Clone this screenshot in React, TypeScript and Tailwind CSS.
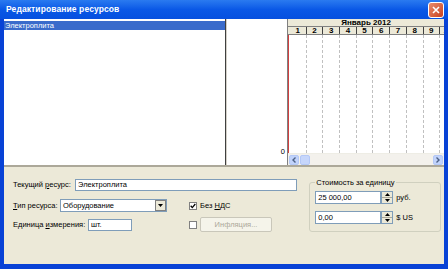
import React from "react";

const days = [1, 2, 3, 4, 5, 6, 7, 8, 9, 10];

function Spinner() {
  return (
    <div className="flex flex-col w-[12px] h-[13px] border border-[#7f9db9] bg-[#ece9d8]">
      <div className="flex-1 flex items-center justify-center border-b border-[#aca899]">
        <svg width="5" height="3" viewBox="0 0 5 3"><path d="M0 3 L2.5 0 L5 3Z" fill="#000" /></svg>
      </div>
      <div className="flex-1 flex items-center justify-center">
        <svg width="5" height="3" viewBox="0 0 5 3"><path d="M0 0 L2.5 3 L5 0Z" fill="#000" /></svg>
      </div>
    </div>
  );
}

export default function App() {
  return (
    <div
      className="w-[448px] h-[269px] flex flex-col bg-[#0842d6] overflow-hidden"
      style={{ fontFamily: '"Liberation Sans", Arial, sans-serif' }}
    >
      {/* title bar */}
      <div className="h-[19px] flex items-center justify-between pl-[6px] pr-[4px] bg-gradient-to-b from-[#2a7af0] via-[#0a58e6] to-[#0650df]">
        <span className="text-white font-bold text-[8.5px] tracking-[0.1px] whitespace-nowrap">Редактирование ресурсов</span>
        <div className="w-[16px] h-[16px] rounded-[3px] border border-white bg-gradient-to-br from-[#e98b6b] to-[#c9401c] flex items-center justify-center">
          <svg width="8" height="8" viewBox="0 0 8 8"><path d="M1 1 L7 7 M7 1 L1 7" stroke="#fff" strokeWidth="1.6" /></svg>
        </div>
      </div>

      {/* body */}
      <div className="flex-1 mx-[4px] mb-[5px] bg-[#ece9d8] flex flex-col">
        {/* top row */}
        <div className="h-[148px] flex border-b-2 border-[#aca899]">
          {/* list */}
          <div className="w-[221px] bg-white pt-[2px]">
            <div className="h-[9px] bg-[#3a6bcb] text-white text-[7.5px] leading-[9px] pl-[1px] whitespace-nowrap">Электроплита</div>
          </div>
          <div className="w-[1px] bg-[#404040]" />
          <div className="w-[1px] bg-[#d4d0c8]" />
          {/* middle */}
          <div className="w-[61px] bg-white flex items-end justify-end pr-[2px] pb-[10px] border-r border-[#808080]">
            <span className="text-[7.5px] leading-none text-black">0</span>
          </div>
          {/* gantt */}
          <div className="flex-1 flex flex-col bg-white overflow-hidden">
            <div className="h-[8px] bg-[#ece9d8] border-b border-[#808080] flex items-center justify-center">
              <span className="text-[8px] font-bold leading-none text-black whitespace-nowrap">Январь 2012</span>
            </div>
            <div className="h-[8px] bg-[#ece9d8] border-b border-[#808080] flex">
              <div className="w-[2px] shrink-0" />
              {days.map((d) => (
                <div key={d} className="w-[16.7px] shrink-0 border-r border-[#404040] text-[8px] font-bold leading-[8px] text-center text-black overflow-hidden">
                  {d}
                </div>
              ))}
            </div>
            <div className="flex-1 flex relative">
              <div className="w-[1px] shrink-0 bg-[#d04040]" />
              <div className="w-[1px] shrink-0" />
              {days.map((d) => (
                <div key={d} className="w-[16.7px] shrink-0 border-r border-dashed border-[#c0c0c0]" />
              ))}
            </div>
            {/* scrollbar */}
            <div className="h-[12px] bg-[#f3f1ec] flex items-center justify-between px-[1px] border-t border-[#eeede5]">
              <div className="flex gap-[1px]">
                <div className="w-[10px] h-[10px] rounded-[2px] bg-[#c1d3fb] border border-[#b4c8f6] flex items-center justify-center">
                  <svg width="4" height="6" viewBox="0 0 4 6"><path d="M3.5 0.5 L1 3 L3.5 5.5" stroke="#4d6185" strokeWidth="1.4" fill="none" /></svg>
                </div>
                <div className="w-[10px] h-[10px] rounded-[2px] bg-[#c6d6fb] border border-[#b4c8f6]" />
              </div>
              <div className="w-[10px] h-[10px] rounded-[2px] bg-[#c1d3fb] border border-[#b4c8f6] flex items-center justify-center">
                <svg width="4" height="6" viewBox="0 0 4 6"><path d="M0.5 0.5 L3 3 L0.5 5.5" stroke="#4d6185" strokeWidth="1.4" fill="none" /></svg>
              </div>
            </div>
          </div>
        </div>

        {/* bottom panel */}
        <div className="flex-1 flex pl-[9px] pr-[3px] pt-[11px] text-[7.5px] text-black whitespace-nowrap">
          <div className="flex flex-col w-[290px]">
            <div className="flex items-center h-[13px]">
              <span className="w-[62px] shrink-0">Текущий <u>р</u>есурс:</span>
              <div className="w-[222px] h-[12px] bg-white border border-[#7f9db9] leading-[10px] pl-[2px]">Электроплита</div>
            </div>
            <div className="flex items-center h-[13px] mt-[8px]">
              <span className="w-[47px] shrink-0"><u>Т</u>ип ресурса:</span>
              <div className="w-[107px] h-[13px] bg-white border border-[#7f9db9] flex items-center justify-between pl-[2px]">
                <span>Оборудование</span>
                <div className="w-[11px] h-[11px] bg-[#ece9d8] border border-[#808080] flex items-center justify-center">
                  <svg width="5" height="3" viewBox="0 0 5 3"><path d="M0 0 L2.5 3 L5 0Z" fill="#000" /></svg>
                </div>
              </div>
              <div className="ml-[22px] flex items-center gap-[3px]">
                <div className="w-[8px] h-[8px] bg-white border border-[#808080] flex items-center justify-center">
                  <svg width="6" height="6" viewBox="0 0 6 6"><path d="M0.7 2.8 L2.3 4.6 L5.3 1" stroke="#000" strokeWidth="1.3" fill="none" /></svg>
                </div>
                <span>Без <u>Н</u>ДС</span>
              </div>
            </div>
            <div className="flex items-center h-[15px] mt-[5px]">
              <span className="w-[75px] shrink-0">Единица <u>и</u>змерения:</span>
              <div className="w-[44px] h-[12px] bg-white border border-[#7f9db9] leading-[10px] pl-[2px]">шт.</div>
              <div className="ml-[57px] w-[8px] h-[8px] bg-white border border-[#808080]" />
              <div className="ml-[3px] w-[72px] h-[15px] border border-[#c9c7ba] rounded-[2px] bg-[#f5f4ea] text-[#aca899] flex items-center justify-center">
                Инфляция...
              </div>
            </div>
          </div>
          <div className="ml-[9px] w-[133px] h-[50px] mt-[4px] relative border border-[#d0d0bf] rounded-[3px]">
            <span className="absolute -top-[5px] left-[5px] bg-[#ece9d8] px-[1px] leading-[9px]">Стоимость за единицу</span>
            <div className="flex flex-col gap-[7px] pl-[5px] pt-[8px]">
              <div className="flex items-center">
                <div className="w-[66px] h-[13px] bg-white border border-[#7f9db9] leading-[11px] pl-[2px]">25 000,00</div>
                <Spinner />
                <span className="ml-[3px]">руб.</span>
              </div>
              <div className="flex items-center">
                <div className="w-[66px] h-[13px] bg-white border border-[#7f9db9] leading-[11px] pl-[2px]">0,00</div>
                <Spinner />
                <span className="ml-[3px]">$ US</span>
              </div>
            </div>
          </div>
        </div>
      </div>
    </div>
  );
}
